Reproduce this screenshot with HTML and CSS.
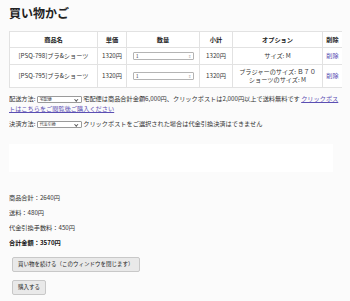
FILE: index.html
```html
<!DOCTYPE html>
<html lang="ja">
<head>
    <meta charset="UTF-8">
    <title>買い物かご</title>
    <link rel="stylesheet" href="styles.css">
</head>
<body>
    <h1>買い物かご</h1>
    <table class="cart">
        <tr>
            <th class="c-name">商品名</th>
            <th class="c-price">単価</th>
            <th class="c-qty">数量</th>
            <th class="c-sub">小計</th>
            <th class="c-opt">オプション</th>
            <th class="c-del">削除</th>
        </tr>
        <tr class="row">
            <td>[PSQ-798]ブラ&amp;ショーツ</td>
            <td>1320円</td>
            <td><div class="qty"><span>1</span><span class="spin">⇕</span></div></td>
            <td>1320円</td>
            <td>サイズ: M</td>
            <td><a href="#">削除</a></td>
        </tr>
        <tr class="row tall">
            <td>[PSQ-795]ブラ&amp;ショーツ</td>
            <td>1320円</td>
            <td><div class="qty"><span>1</span><span class="spin">⇕</span></div></td>
            <td>1320円</td>
            <td>ブラジャーのサイズ: Ｂ７０<br>ショーツのサイズ: M</td>
            <td><a href="#">削除</a></td>
        </tr>
    </table>

    <p class="ship">配送方法: <span class="sel">宅配便<i></i></span> 宅配便は商品合計金額6,000円、クリックポストは2,000円以上で送料無料です <a href="#">クリックポストはこちらをご閲覧後ご購入ください</a></p>
    <p class="pay">決済方法: <span class="sel">代金引換<i></i></span> クリックポストをご選択された場合は代金引換決済はできません</p>

    <div class="blank"></div>

    <div class="totals">
        <p>商品合計：2640円</p>
        <p>送料：480円</p>
        <p>代金引換手数料：450円</p>
        <p class="grand">合計金額：3570円</p>
    </div>

    <button class="btn">買い物を続ける（このウィンドウを閉じます）</button>
    <button class="btn buy">購入する</button>
</body>
</html>
```

FILE: styles.css
```css
body {
    font-family: "Noto Sans CJK JP", "Noto Sans", sans-serif;
    font-size: 6.2px;
    color: #333;
    background-color: #fbfbfb;
    margin: 0 8px 0 9px;
}

h1 {
    font-size: 12px;
    line-height: 17px;
    font-weight: bold;
    color: #222;
    margin: 4px 0 0;
    height: 27px;
}

.cart {
    width: 333px;
    table-layout: fixed;
    border-collapse: collapse;
    background: #fff;
}

.cart th,
.cart td {
    box-sizing: border-box;
    border: 1px solid #e2e2e2;
    text-align: center;
    padding: 0 2px;
    height: 16px;
    line-height: 8px;
    white-space: nowrap;
}

.cart tr.row td {
    height: 17px;
}

.cart tr.tall td {
    height: 23px;
}

.cart th {
    font-weight: bold;
    color: #222;
}

.c-name { width: 88px; }
.c-price { width: 29px; }
.c-qty { width: 73px; }
.c-sub { width: 33px; }
.c-opt { width: 90px; }
.c-del { width: 20px; }

.qty {
    display: flex;
    justify-content: space-between;
    align-items: center;
    box-sizing: border-box;
    width: 61px;
    height: 8px;
    border: 1px solid #b4b4b4;
    border-radius: 1px;
    padding: 0 2px;
    text-align: left;
    font-size: 4.5px;
    line-height: 6px;
    background: #fff;
    margin-left: 4px;
}

.qty .spin {
    color: #aaa;
    font-size: 4px;
}

a {
    color: #5b4fb3;
}

.cart a {
    text-decoration: none;
}

.ship,
.pay {
    line-height: 9.5px;
    margin: 6px 0 0;
}

.pay {
    margin-top: 6px;
}

.sel {
    display: inline-flex;
    justify-content: space-between;
    align-items: center;
    box-sizing: border-box;
    width: 45px;
    height: 7px;
    padding: 0 3px 0 2px;
    border: 1px solid #9a9a9a;
    border-radius: 1px;
    background: #fff;
    font-size: 4px;
    line-height: 5px;
    vertical-align: middle;
}

.sel i {
    width: 1.5px;
    height: 1.5px;
    border-right: 1px solid #555;
    border-bottom: 1px solid #555;
    transform: rotate(45deg);
    margin-top: -1px;
}

.blank {
    background: #fff;
    width: 328px;
    height: 28px;
    margin: 15px 0 0 -4px;
}

.totals {
    margin-top: 21px;
}

.totals p {
    margin: 0 0 6px;
    line-height: 9px;
}

.totals .grand {
    font-weight: bold;
    color: #111;
}

.btn {
    display: block;
    box-sizing: border-box;
    font-family: inherit;
    font-size: 5.5px;
    color: #222;
    background: #e9e9e9;
    border: 1px solid #c8c8c8;
    border-radius: 2px;
    height: 15px;
    padding: 0 5px;
    margin: 10px 0 0 3px;
}

.buy {
    margin-top: 8px;
}
```
